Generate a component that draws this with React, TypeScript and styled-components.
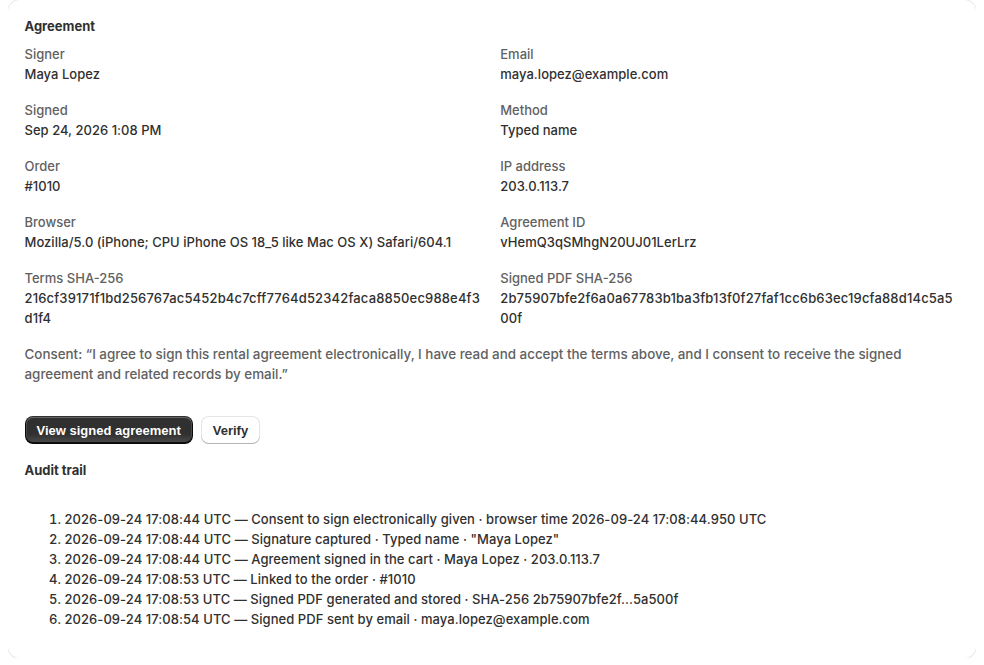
import React from "react";
import styled, { createGlobalStyle } from "styled-components";

const Global = createGlobalStyle`
  html, body { background: #ffffff; }
  body {
    margin: 0 8px 8px 8px;
    font-family: Inter, "Noto Sans", sans-serif;
    font-size: 13px;
    line-height: 20px;
    color: #303030;
  }
`;

const Card = styled.section`
  background: #ffffff;
  border-radius: 12px;
  box-shadow: 0 0 0 1px #ebebeb, 0 1px 1px 0 rgba(26, 26, 26, 0.14);
  padding: 16px 16px 16px 16.5px;
  display: flex;
  flex-direction: column;
`;

const Heading = styled.h2`
  margin: 0;
  font-size: 13px;
  line-height: 20px;
  font-weight: 650;
  color: #303030;
`;

const FieldGrid = styled.dl`
  margin: 8px 0 0 0;
  display: grid;
  grid-template-columns: 1fr 1fr;
  column-gap: 16px;
  row-gap: 16px;
`;

const Field = styled.div`
  display: flex;
  flex-direction: column;
  min-width: 0;
`;

const Label = styled.dt`
  color: #616161;
  font-weight: 450;
`;

const Value = styled.dd<{ $hash?: boolean }>`
  margin: 0;
  color: #303030;
  font-weight: 450;
  letter-spacing: ${(p) => (p.$hash ? "0.16px" : "0.03px")};
  word-break: ${(p) => (p.$hash ? "break-all" : "normal")};
`;

const Consent = styled.p`
  margin: 16px 0 0 0;
  color: #616161;
  font-size: 13.4px;
  font-weight: 450;
`;

const Actions = styled.div`
  display: flex;
  gap: 8px;
  margin-top: 32px;
`;

const Button = styled.button<{ $primary?: boolean }>`
  font-family: "Liberation Sans", Arial, sans-serif;
  font-size: 13px;
  font-weight: 700;
  height: 28px;
  padding: 0 12px;
  border-radius: 8px;
  cursor: pointer;
  border: none;
  color: ${(p) => (p.$primary ? "#ffffff" : "#303030")};
  background: ${(p) =>
    p.$primary
      ? "linear-gradient(180deg, rgba(48,48,48,0) 63.53%, rgba(255,255,255,0.15) 100%), #303030"
      : "#ffffff"};
  box-shadow: ${(p) =>
    p.$primary
      ? "0 -1px 0 1px rgba(0,0,0,0.8) inset, 0 0 0 1px #303030 inset, 0 0.5px 0 1.5px rgba(255,255,255,0.25) inset"
      : "0 -1px 0 0 #b5b5b5 inset, 0 0 0 1px rgba(0,0,0,0.1) inset, 0 0.5px 0 1.5px #fff inset"};
`;

const SubHeading = styled(Heading)`
  margin-top: 16px;
`;

const AuditList = styled.ol`
  margin: 29px 0 13px 0;
  padding-left: 40px;
  color: #303030;
  font-weight: 450;
  letter-spacing: 0.06px;
`;

const Item = styled.li``;

const fields: { label: string; value: string; hash?: boolean }[] = [
  { label: "Signer", value: "Maya Lopez" },
  { label: "Email", value: "maya.lopez@example.com" },
  { label: "Signed", value: "Sep 24, 2026 1:08 PM" },
  { label: "Method", value: "Typed name" },
  { label: "Order", value: "#1010" },
  { label: "IP address", value: "203.0.113.7" },
  { label: "Browser", value: "Mozilla/5.0 (iPhone; CPU iPhone OS 18_5 like Mac OS X) Safari/604.1" },
  { label: "Agreement ID", value: "vHemQ3qSMhgN20UJ01LerLrz" },
  {
    label: "Terms SHA-256",
    value: "216cf39171f1bd256767ac5452b4c7cff7764d52342faca8850ec988e4f3d1f4",
    hash: true,
  },
  {
    label: "Signed PDF SHA-256",
    value: "2b75907bfe2f6a0a67783b1ba3fb13f0f27faf1cc6b63ec19cfa88d14c5a500f",
    hash: true,
  },
];

const audit = [
  "2026-09-24 17:08:44 UTC — Consent to sign electronically given · browser time 2026-09-24 17:08:44.950 UTC",
  '2026-09-24 17:08:44 UTC — Signature captured · Typed name · "Maya Lopez"',
  "2026-09-24 17:08:44 UTC — Agreement signed in the cart · Maya Lopez · 203.0.113.7",
  "2026-09-24 17:08:53 UTC — Linked to the order · #1010",
  "2026-09-24 17:08:53 UTC — Signed PDF generated and stored · SHA-256 2b75907bfe2f...5a500f",
  "2026-09-24 17:08:54 UTC — Signed PDF sent by email · maya.lopez@example.com",
];

export default function App() {
  return (
    <>
      <Global />
      <Card>
        <Heading>Agreement</Heading>
        <FieldGrid>
          {fields.map((f) => (
            <Field key={f.label}>
              <Label>{f.label}</Label>
              <Value $hash={f.hash}>{f.value}</Value>
            </Field>
          ))}
        </FieldGrid>
        <Consent>
          Consent: “I agree to sign this rental agreement electronically, I have read and accept the terms
          above, and I consent to receive the signed agreement and related records by email.”
        </Consent>
        <Actions>
          <Button $primary>View signed agreement</Button>
          <Button>Verify</Button>
        </Actions>
        <SubHeading>Audit trail</SubHeading>
        <AuditList>
          {audit.map((a) => (
            <Item key={a}>{a}</Item>
          ))}
        </AuditList>
      </Card>
    </>
  );
}
